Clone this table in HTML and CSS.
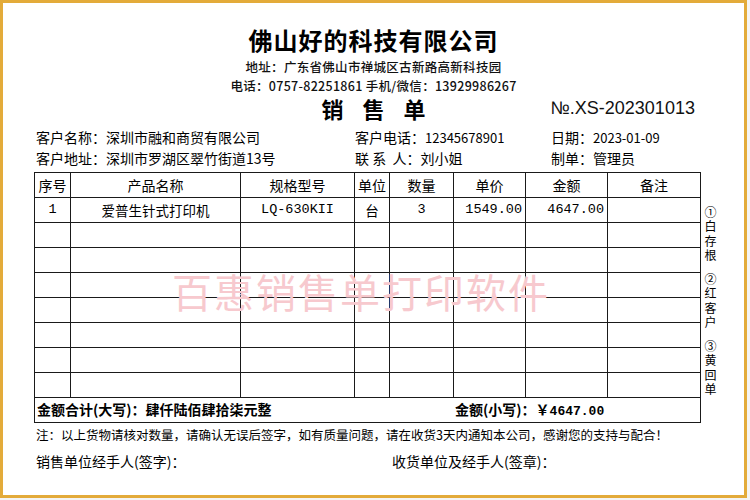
FILE: index.html
```html
<!DOCTYPE html>
<html lang="zh-CN">
<head>
<meta charset="utf-8">
<title>销售单</title>
<link rel="stylesheet" href="styles.css">
</head>
<body>
<div class="page">
  <header class="head">
    <h1 class="company">佛山好的科技有限公司</h1>
    <p class="addr">地址：广东省佛山市禅城区古新路高新科技园</p>
    <p class="addr">电话：0757-82251861 手机/微信：13929986267</p>
    <div class="titlebar">
      <span></span>
      <h2 class="doctitle">销 售 单</h2>
      <span class="docno">№.XS-202301013</span>
    </div>
  </header>

  <section class="info">
    <div>客户名称：深圳市融和商贸有限公司</div>
    <div>客户电话：<span class="num">12345678901</span></div>
    <div>日期：<span class="num">2023-01-09</span></div>
    <div>客户地址：深圳市罗湖区翠竹街道13号</div>
    <div>联&nbsp;系&nbsp;&nbsp;人：刘小姐</div>
    <div>制单：管理员</div>
  </section>

  <section class="body">
    <div class="tablewrap">
      <table class="grid">
        <colgroup>
          <col class="c1"><col class="c2"><col class="c3"><col class="c4">
          <col class="c5"><col class="c6"><col class="c7"><col class="c8">
        </colgroup>
        <thead>
          <tr><th>序号</th><th>产品名称</th><th>规格型号</th><th>单位</th><th>数量</th><th>单价</th><th>金额</th><th>备注</th></tr>
        </thead>
        <tbody>
          <tr><td class="ctr mono">1</td><td class="ctr">爱普生针式打印机</td><td class="ctr mono">LQ-630KII</td><td class="ctr">台</td><td class="ctr mono">3</td><td class="rt mono">1549.00</td><td class="rt mono">4647.00</td><td></td></tr>
          <tr><td></td><td></td><td></td><td></td><td></td><td></td><td></td><td></td></tr>
          <tr><td></td><td></td><td></td><td></td><td></td><td></td><td></td><td></td></tr>
          <tr><td></td><td></td><td></td><td></td><td></td><td></td><td></td><td></td></tr>
          <tr><td></td><td></td><td></td><td></td><td></td><td></td><td></td><td></td></tr>
          <tr><td></td><td></td><td></td><td></td><td></td><td></td><td></td><td></td></tr>
          <tr><td></td><td></td><td></td><td></td><td></td><td></td><td></td><td></td></tr>
          <tr><td></td><td></td><td></td><td></td><td></td><td></td><td></td><td></td></tr>
          <tr class="total"><td colspan="8"><div class="totalrow"><span>金额合计(大写)：肆仟陆佰肆拾柒元整</span><span>金额(小写)：￥<span class="mono">4647.00</span></span></div></td></tr>
        </tbody>
      </table>
      <div class="watermark">百惠销售单打印软件</div>
    </div>
    <aside class="side">
      <div class="copy">①白存根</div>
      <div class="copy">②红客户</div>
      <div class="copy">③黄回单</div>
    </aside>
  </section>

  <p class="note">注：以上货物请核对数量，请确认无误后签字，如有质量问题，请在收货3天内通知本公司，感谢您的支持与配合！</p>
  <div class="sign">
    <span>销售单位经手人(签字)：</span>
    <span>收货单位及经手人(签章)：</span>
  </div>
</div>
</body>
</html>
```

FILE: styles.css
```css
* { box-sizing: border-box; }
html, body { margin: 0; padding: 0; }
body {
  background: #f4f4f4;
  font-family: "Noto Sans CJK SC", "Noto Sans", sans-serif;
  color: #000;
}
.page {
  width: 747px;
  height: 498px;
  background: #fff;
  border: 3px solid #e3ab3a;
  overflow: hidden;
}
.head { padding-top: 20px; text-align: center; }
.company {
  margin: 0;
  font-size: 24px;
  line-height: 34px;
  font-weight: 700;
  letter-spacing: 1px;
}
.addr {
  margin: 0;
  font-size: 12.5px;
  line-height: 19px;
  font-weight: 500;
  color: #111;
  letter-spacing: 0.3px;
}
.titlebar {
  display: grid;
  grid-template-columns: 1fr auto 1fr;
  align-items: center;
  height: 26px;
}
.doctitle {
  margin: 0;
  font-size: 22px;
  line-height: 26px;
  font-weight: 700;
  letter-spacing: 7px;
  margin-right: -7px;
}
.docno {
  justify-self: start;
  margin-left: 125px;
  font-family: "Liberation Sans", Arial, sans-serif;
  font-size: 18px;
  line-height: 26px;
  color: #111;
}
.info {
  display: grid;
  grid-template-columns: 319px 196px auto;
  padding-left: 33px;
  margin-top: 6px;
  font-size: 14px;
  line-height: 21px;
}
.num { font-size: 13px; }
.body {
  display: flex;
  margin-top: 3px;
  padding-left: 31px;
}
.tablewrap { position: relative; }
.grid {
  border-collapse: collapse;
  table-layout: fixed;
  width: 666px;
}
.c1 { width: 36px; }
.c2 { width: 170px; }
.c3 { width: 114px; }
.c4 { width: 35px; }
.c5 { width: 64px; }
.c6 { width: 72px; }
.c7 { width: 82px; }
.c8 { width: 93px; }
.grid th, .grid td {
  border: 1px solid #1a1a1a;
  height: 25px;
  padding: 0 3px;
  font-size: 13.5px;
  line-height: 18px;
}
.grid th { font-weight: 400; text-align: center; font-size: 14px; }
.ctr { text-align: center; }
.rt { text-align: right; }
.mono { font-family: "Liberation Mono", "DejaVu Sans Mono", monospace; font-size: 12px; }
.total td { padding: 0 2px; }
.totalrow {
  display: grid;
  grid-template-columns: 418px auto;
  font-weight: 700;
  font-size: 14px;
}
.totalrow .mono { font-size: 13px; font-weight: 700; }
.watermark {
  position: absolute;
  left: 138px;
  top: 98px;
  font-size: 40px;
  line-height: 42px;
  letter-spacing: 2px;
  color: #f7c9ce;
  pointer-events: none;
  white-space: nowrap;
}
.side {
  display: flex;
  flex-direction: column;
  gap: 9px;
  padding-top: 34px;
  padding-left: 3px;
  font-size: 12px;
}
.copy {
  writing-mode: vertical-rl;
  text-orientation: upright;
  letter-spacing: 2.5px;
  line-height: 12px;
  width: 12px;
}
.note {
  margin: 3px 0 0;
  padding-left: 33px;
  font-size: 12.5px;
  line-height: 18px;
}
.sign {
  display: grid;
  grid-template-columns: 356px auto;
  margin-top: 6px;
  padding-left: 33px;
  font-size: 14px;
  line-height: 22px;
}
```
